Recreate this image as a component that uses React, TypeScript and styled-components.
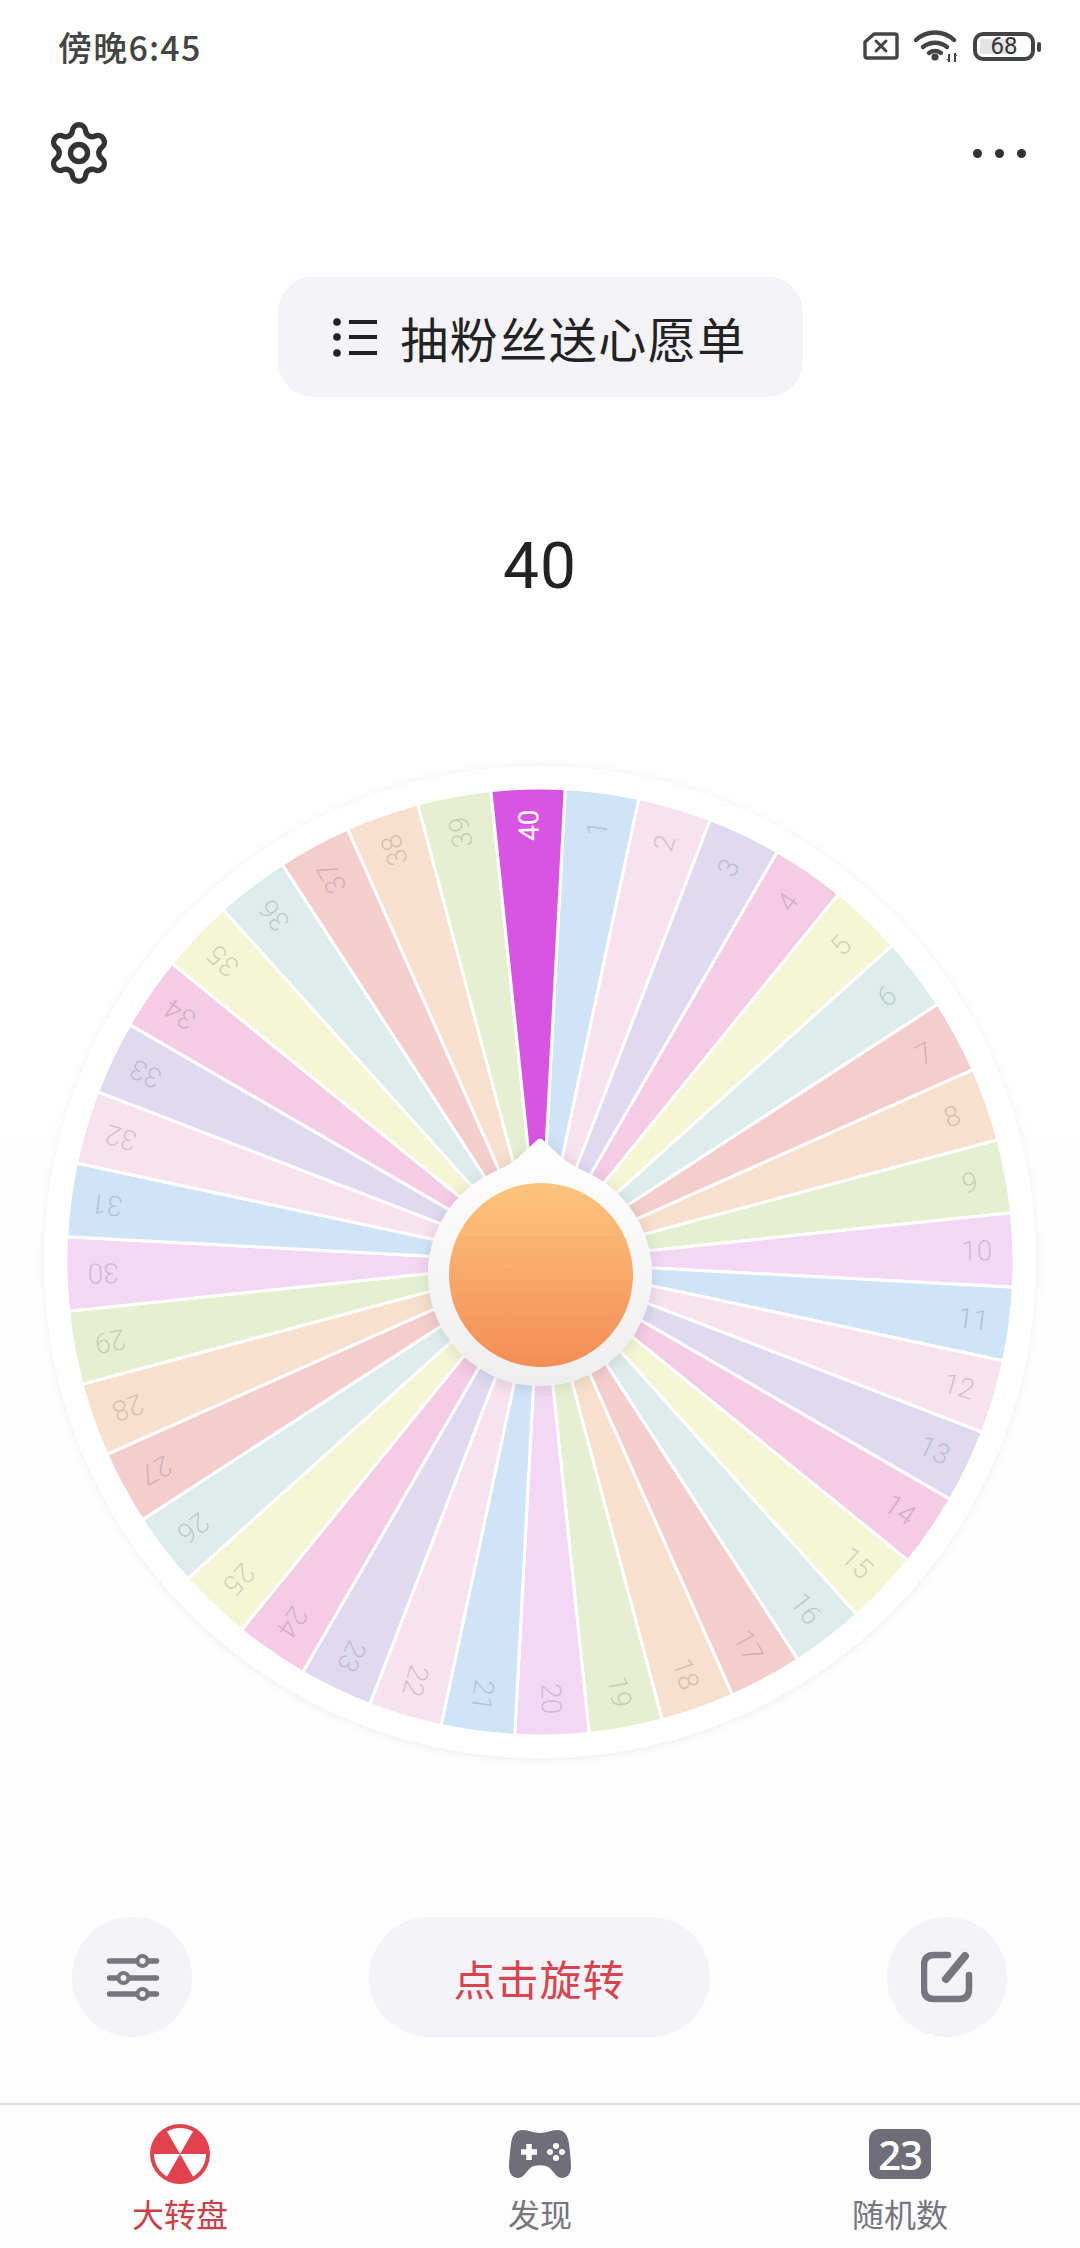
import React from 'react';
import styled, { createGlobalStyle } from 'styled-components';
import { Settings } from 'lucide-react';

const CJK = `'Noto Sans CJK SC', 'Noto Sans', sans-serif`;

const GlobalStyle = createGlobalStyle`
  html, body {
    margin: 0;
    padding: 0;
    background: #fff;
  }
`;

const COLORS = ['#cfe4f7', '#f7e2ed', '#e0daf1', '#f4cce4', '#f5f6d5', '#deedeb', '#f3cecd', '#f7e0cd', '#e6f0d1', '#f3d7f5'];
const CX = 540;
const CY = 1262;
const R = 474;
const OFFSET = -1.45;

const polar = (r: number, deg: number, cy = CY) => {
  const rad = (deg * Math.PI) / 180;
  return { x: CX + r * Math.sin(rad), y: cy - r * Math.cos(rad) };
};

const wedgePath = (angle: number) => {
  const a = polar(R, angle - 4.5);
  const b = polar(R, angle + 4.5);
  return `M${CX} ${CY} L${a.x} ${a.y} A${R} ${R} 0 0 1 ${b.x} ${b.y} Z`;
};

const segments = Array.from({ length: 40 }, (_, i) => {
  const n = i + 1;
  const angle = n * 9 + OFFSET;
  return { n, angle, color: n === 40 ? '#d955e1' : COLORS[i % 10], label: polar(437, angle) };
});

const Wheel = () => (
  <WheelSvg viewBox="0 740 1080 1050">
    <defs>
      <filter id="discShadow" x="-10%" y="-10%" width="120%" height="120%">
        <feDropShadow dx="0" dy="1" stdDeviation="4" floodColor="#000" floodOpacity="0.07" />
      </filter>
      <filter id="hubShadow" x="-20%" y="-20%" width="140%" height="140%">
        <feDropShadow dx="0" dy="2" stdDeviation="8" floodColor="#000" floodOpacity="0.12" />
      </filter>
      <linearGradient id="hubFill" x1="0" y1="0" x2="0" y2="1">
        <stop offset="0" stopColor="#ffffff" />
        <stop offset="1" stopColor="#eeeeee" />
      </linearGradient>
      <linearGradient id="ballFill" x1="0" y1="0" x2="0" y2="1">
        <stop offset="0" stopColor="#fcc57c" />
        <stop offset="1" stopColor="#f48c56" />
      </linearGradient>
    </defs>
    <circle cx={CX} cy={CY} r={496} fill="#fff" filter="url(#discShadow)" />
    {segments.map((s) => (
      <path key={s.n} d={wedgePath(s.angle)} fill={s.color} stroke="#fff" strokeWidth={3} />
    ))}
    {segments.map((s) => (
      <SegmentLabel
        key={s.n}
        $active={s.n === 40}
        x={s.label.x}
        y={s.label.y}
        textAnchor="middle"
        dominantBaseline="central"
        transform={`rotate(${s.angle - 90} ${s.label.x} ${s.label.y})`}
      >
        {s.n}
      </SegmentLabel>
    ))}
    <path
      d="M536 1141 Q540 1136 544 1141 L562 1158 Q572 1166 586 1172 A112 112 0 1 1 494 1172 Q508 1166 518 1158 Z"
      fill="url(#hubFill)"
      filter="url(#hubShadow)"
    />
    <circle cx={541} cy={1275} r={92} fill="url(#ballFill)" />
  </WheelSvg>
);

const SimIcon = () => (
  <svg width="36" height="28" viewBox="0 0 36 28">
    <path d="M11 2 H32 Q34 2 34 4 V24 Q34 26 32 26 H4 Q2 26 2 24 V10 Z" fill="none" stroke="#444" strokeWidth="3.4" strokeLinejoin="round" />
    <path d="M13 9 L23 19 M23 9 L13 19" stroke="#444" strokeWidth="3" strokeLinecap="round" />
  </svg>
);

const WifiIcon = () => (
  <svg width="44" height="34" viewBox="0 0 44 34">
    <g fill="none" stroke="#444" strokeWidth="4.4" strokeLinecap="round">
      <path d="M2 11 A28 28 0 0 1 40 11" />
      <path d="M9 18 A19 19 0 0 1 33 18" />
      <path d="M15 24 A10 10 0 0 1 27 24" />
    </g>
    <circle cx="21" cy="28" r="3.6" fill="#444" />
    <path d="M35 25 V33 M41 24 V33" stroke="#444" strokeWidth="2" />
    <path d="M32.5 30 L35 33 L35 30 Z M41 24 L43.5 27 L41 27 Z" fill="#444" />
  </svg>
);

const BatteryIcon = () => (
  <BatteryBox>
    <BatteryLevel />
    <BatteryText>68</BatteryText>
    <BatteryNub />
  </BatteryBox>
);

const ListIcon = () => (
  <svg width="44" height="40" viewBox="0 0 44 40">
    <g fill="#222">
      <circle cx="4" cy="5" r="3.8" />
      <circle cx="4" cy="20" r="3.8" />
      <circle cx="4" cy="36" r="3.8" />
    </g>
    <path d="M16 5 H44 M16 20 H44 M16 36 H44" stroke="#222" strokeWidth="4" />
  </svg>
);

const SlidersIcon = () => (
  <svg width="56" height="52" viewBox="104.5 1953 56 52">
    <path d="M110 1963 H157 M110 1980 H157 M110 1996 H157" stroke="#77757d" strokeWidth="5.5" strokeLinecap="round" />
    {[
      [143, 1963],
      [124, 1980],
      [143, 1996],
    ].map(([x, y]) => (
      <circle key={y} cx={x} cy={y} r={5} fill="#f4f3f7" stroke="#77757d" strokeWidth="4" />
    ))}
  </svg>
);

const EditIcon = () => (
  <svg width="52" height="52" viewBox="0 0 52 52">
    <path d="M27 4 H13 Q3 4 3 14 V38 Q3 48 13 48 H38 Q48 48 48 38 V24" fill="none" stroke="#77757d" strokeWidth="6.5" strokeLinecap="round" />
    <path d="M44 5 L25 28" stroke="#77757d" strokeWidth="8" strokeLinecap="round" />
  </svg>
);

const WheelTabIcon = () => {
  const sector = (deg: number) => {
    const r = 26;
    const rad = (d: number) => (d * Math.PI) / 180;
    const x1 = 30 + r * Math.sin(rad(deg - 30));
    const y1 = 30 - r * Math.cos(rad(deg - 30));
    const x2 = 30 + r * Math.sin(rad(deg + 30));
    const y2 = 30 - r * Math.cos(rad(deg + 30));
    return `M30 30 L${x1} ${y1} A${r} ${r} 0 0 1 ${x2} ${y2} Z`;
  };
  return (
    <svg width="60" height="60" viewBox="0 0 60 60">
      <circle cx="30" cy="30" r="30" fill="#e0434d" />
      <path d={`${sector(0)} ${sector(120)} ${sector(240)}`} fill="#fff" />
    </svg>
  );
};

const GameIcon = () => (
  <svg width="62" height="48" viewBox="0 0 62 48">
    <path
      d="M14 0 C20 0 24 3 31 3 C38 3 42 0 48 0 C56 0 59 6 60 14 C61 22 62 30 62 37 C62 44 58 48 53 48 C46 48 44 38 37 36 C33 35 29 35 25 36 C18 38 16 48 9 48 C4 48 0 44 0 37 C0 30 1 22 2 14 C3 6 6 0 14 0 Z"
      fill="#6f6d78"
    />
    <path d="M12 22 H28 M20 14 V30" stroke="#fff" strokeWidth="5.5" />
    <g fill="#fff">
      <circle cx="47" cy="16" r="3" />
      <circle cx="41" cy="22" r="3" />
      <circle cx="53" cy="22" r="3" />
      <circle cx="47" cy="28" r="3" />
    </g>
  </svg>
);

export default function App() {
  return (
    <Page>
      <GlobalStyle />
      <StatusBar>
        <Clock>傍晚6:45</Clock>
        <StatusIcons>
          <SimIcon />
          <WifiIcon />
          <BatteryIcon />
        </StatusIcons>
      </StatusBar>
      <TopBar>
        <Settings size={68} strokeWidth={1.9} color="#333" />
        <MoreDots>
          <Dot />
          <Dot />
          <Dot />
        </MoreDots>
      </TopBar>
      <TitlePill>
        <ListIcon />
        <TitleText>抽粉丝送心愿单</TitleText>
      </TitlePill>
      <ResultNumber>40</ResultNumber>
      <Wheel />
      <Controls>
        <RoundButton>
          <SlidersIcon />
        </RoundButton>
        <SpinButton>点击旋转</SpinButton>
        <RoundButton>
          <EditIcon />
        </RoundButton>
      </Controls>
      <TabBar>
        <Tab>
          <TabIcon>
            <WheelTabIcon />
          </TabIcon>
          <TabLabel $active>大转盘</TabLabel>
        </Tab>
        <Tab>
          <TabIcon>
            <GameIcon />
          </TabIcon>
          <TabLabel>发现</TabLabel>
        </Tab>
        <Tab>
          <TabIcon>
            <NumberBadge>23</NumberBadge>
          </TabIcon>
          <TabLabel>随机数</TabLabel>
        </Tab>
      </TabBar>
    </Page>
  );
}

const Page = styled.div`
  width: 1080px;
  height: 2248px;
  display: flex;
  flex-direction: column;
  align-items: center;
  overflow: hidden;
  background: linear-gradient(180deg, #ffffff 0%, #ffffff 45%, #fdfcfe 100%);
  font-family: ${CJK};
`;

const StatusBar = styled.div`
  width: 100%;
  box-sizing: border-box;
  height: 92px;
  padding: 0 39px 0 58px;
  display: flex;
  align-items: center;
  justify-content: space-between;
`;

const Clock = styled.span`
  font-size: 34px;
  font-weight: 500;
  color: #444;
  letter-spacing: 1.2px;
`;

const StatusIcons = styled.div`
  display: flex;
  align-items: center;
  gap: 15px;
`;

const BatteryBox = styled.div`
  position: relative;
  box-sizing: border-box;
  width: 62px;
  height: 29px;
  margin-right: 6px;
  border: 4px solid #444;
  border-radius: 10px;
  display: flex;
  align-items: center;
  justify-content: center;
`;

const BatteryLevel = styled.div`
  position: absolute;
  left: 3px;
  top: 3px;
  bottom: 3px;
  width: 32px;
  border-radius: 2px;
  background: #e4e4e4;
`;

const BatteryText = styled.span`
  position: relative;
  font-family: Roboto, sans-serif;
  font-size: 24px;
  line-height: 20px;
  color: #333;
`;

const BatteryNub = styled.div`
  position: absolute;
  right: -10px;
  top: 6px;
  width: 4px;
  height: 10px;
  border-radius: 2px;
  background: #444;
`;

const TopBar = styled.div`
  width: 100%;
  box-sizing: border-box;
  height: 122px;
  padding: 0 54px 0 45px;
  display: flex;
  align-items: center;
  justify-content: space-between;
`;

const MoreDots = styled.div`
  display: flex;
  gap: 13px;
`;

const Dot = styled.span`
  width: 9px;
  height: 9px;
  border-radius: 50%;
  background: #333;
`;

const TitlePill = styled.div`
  margin-top: 62px;
  width: 525px;
  height: 121px;
  flex: none;
  border-radius: 36px;
  background: #f3f3f8;
  display: flex;
  align-items: center;
  justify-content: center;
  gap: 23px;
`;

const TitleText = styled.span`
  font-size: 48px;
  line-height: 60px;
  letter-spacing: 1.5px;
  color: #222;
`;

const ResultNumber = styled.div`
  margin-top: 120px;
  height: 100px;
  line-height: 100px;
  font-family: Roboto, sans-serif;
  font-size: 64px;
  letter-spacing: 1px;
  color: #222;
`;

const WheelSvg = styled.svg`
  display: block;
  margin-top: 123px;
  width: 1080px;
  height: 1050px;
  flex: none;
`;

const SegmentLabel = styled.text<{ $active?: boolean }>`
  font-family: Roboto, sans-serif;
  font-size: 28px;
  font-weight: ${(p) => (p.$active ? 400 : 300)};
  fill: ${(p) => (p.$active ? '#ffffff' : 'rgba(50, 50, 60, 0.2)')};
`;

const Controls = styled.div`
  width: 100%;
  box-sizing: border-box;
  margin-top: 127px;
  padding: 0 73px 0 72px;
  display: flex;
  justify-content: space-between;
  flex: none;
`;

const RoundButton = styled.div`
  width: 120px;
  height: 120px;
  border-radius: 50%;
  background: #f4f3f7;
  display: flex;
  align-items: center;
  justify-content: center;
`;

const SpinButton = styled.div`
  width: 341px;
  height: 120px;
  border-radius: 60px;
  background: #f4f3f7;
  display: flex;
  align-items: center;
  justify-content: center;
  font-size: 42px;
  letter-spacing: 1px;
  color: #d8434f;
`;

const TabBar = styled.div`
  width: 100%;
  margin-top: auto;
  box-sizing: border-box;
  height: 145px;
  border-top: 2px solid #dbd9df;
  display: grid;
  grid-template-columns: repeat(3, 1fr);
`;

const Tab = styled.div`
  display: flex;
  flex-direction: column;
  align-items: center;
  padding-top: 17px;
  gap: 7px;
`;

const TabIcon = styled.div`
  height: 64px;
  display: flex;
  align-items: center;
  justify-content: center;
`;

const TabLabel = styled.span<{ $active?: boolean }>`
  font-size: 32px;
  line-height: 40px;
  color: ${(p) => (p.$active ? '#c9404b' : '#77757d')};
`;

const NumberBadge = styled.div`
  width: 62px;
  height: 50px;
  border-radius: 10px;
  background: #6f6d78;
  display: flex;
  align-items: center;
  justify-content: center;
  font-family: 'Open Sans', sans-serif;
  font-size: 40px;
  font-weight: 600;
  letter-spacing: -1px;
  color: #fff;
`;
